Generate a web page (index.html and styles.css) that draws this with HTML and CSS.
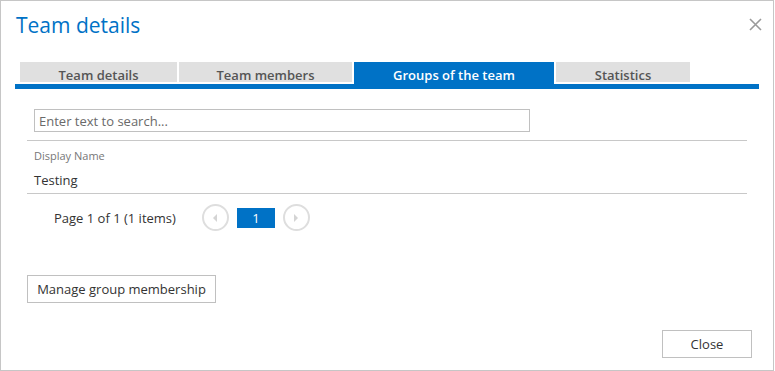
FILE: index.html
```html
<html>
<head>
<title>Team details</title>
<link rel="stylesheet" href="styles.css">
</head>
<body>
<div id="dialog">
	<div class="head">
		<div class="title">Team details</div>
		<div class="close_x">
			<svg width="13" height="13" viewBox="0 0 13 13"><path d="M1 1L12 12M12 1L1 12" stroke="#9a9a9a" stroke-width="1.6"/></svg>
		</div>
	</div>
	<div class="tabs">
		<div class="tab t1">Team details</div>
		<div class="tab t2">Team members</div>
		<div class="tab t3 active">Groups of the team</div>
		<div class="tab t4">Statistics</div>
	</div>
	<div class="tabline"></div>

	<div class="panel">
		<div class="search"><input type="text" placeholder="Enter text to search..."></div>
		<div class="grid">
			<div class="colhead">Display Name</div>
			<div class="row">Testing</div>
		</div>
		<div class="pager">
			<span class="info">Page 1 of 1 (1 items)</span>
			<span class="circ"><svg width="8" height="10" viewBox="0 0 8 10"><path d="M6 1L2 5L6 9Z" fill="#d4d4d4"/></svg></span>
			<span class="page">1</span>
			<span class="circ"><svg width="8" height="10" viewBox="0 0 8 10"><path d="M2 1L6 5L2 9Z" fill="#d4d4d4"/></svg></span>
		</div>
		<div class="btnrow"><input type="button" class="btn manage" value="Manage group membership"></div>
	</div>

	<div class="foot"><input type="button" class="btn close" value="Close"></div>
</div>
</body>
</html>
```

FILE: styles.css
```css
	body{
		margin:0;
		font-family:"Open Sans", "Noto Sans", sans-serif;
		background:#fff;
	}
	#dialog{
		width:774px;
		height:371px;
		box-sizing:border-box;
		border:solid 1px #c6c6c6;
		display:flex;
		flex-direction:column;
	}
	.head{
		display:flex;
		justify-content:space-between;
		padding:9px 11px 0 15px;
		height:52px;
		box-sizing:border-box;
	}
	.title{
		font-size:21px;
		color:#0072c6;
		line-height:30px;
	}
	.close_x{
		padding-top:8px;
	}
	.tabs{
		display:flex;
		align-items:flex-end;
		gap:2px;
		margin-left:19px;
		height:22px;
		margin-top:9px;
	}
	.tab{
		height:20px;
		box-sizing:border-box;
		padding-top:3px;
		margin-bottom:2px;
		background:#e0e0e0;
		color:#555;
		font-size:13px;
		font-weight:600;
		text-align:center;
		line-height:20px;
		white-space:nowrap;
	}
	.t1{ width:157px; }
	.t2{ width:173px; }
	.t3{ width:200px; }
	.t4{ width:134px; }
	.tab.active{
		height:22px;
		margin-bottom:0;
		background:#0072c6;
		color:#fff;
	}
	.tabline{
		height:5px;
		background:#0072c6;
		margin:0 14px 0 14px;
	}
	.panel{
		flex:1;
		padding:0 26px 0 26px;
	}
	.search{
		padding:20px 0 8px 7px;
	}
	.search input{
		width:496px;
		height:23px;
		box-sizing:border-box;
		border:solid 1px #c0c0c0;
		padding:0 4px;
		font:13px "Open Sans", sans-serif;
		color:#333;
		outline:none;
	}
	.search input::placeholder{
		color:#6a6a6a;
	}
	.grid{
		border-top:solid 1px #c8c8c8;
		border-bottom:solid 1px #c8c8c8;
	}
	.colhead{
		font-size:11px;
		color:#777;
		padding:7px 0 0 7px;
		line-height:15px;
	}
	.row{
		font-size:13px;
		color:#333;
		padding:5px 0 0 7px;
		line-height:24px;
		height:25px;
	}
	.pager{
		display:flex;
		align-items:center;
		height:47px;
		padding-left:27px;
		font-size:13px;
		color:#333;
	}
	.info{
		margin-right:26px;
	}
	.circ{
		width:23px;
		height:23px;
		border:solid 2px #dedede;
		border-radius:50%;
		display:flex;
		align-items:center;
		justify-content:center;
	}
	.page{
		width:38px;
		height:20px;
		background:#0072c6;
		color:#fff;
		text-align:center;
		line-height:20px;
		margin:0 8px;
	}
	.btnrow{
		padding-top:34px;
	}
	.btn{
		background:#fff;
		border:solid 1px #c0c0c0;
		height:28px;
		font:13px "Open Sans", sans-serif;
		color:#333;
		padding:0;
	}
	.manage{
		width:189px;
	}
	.foot{
		display:flex;
		justify-content:flex-end;
		padding:0 21px 12px 0;
	}
	.close{
		width:90px;
	}
```
